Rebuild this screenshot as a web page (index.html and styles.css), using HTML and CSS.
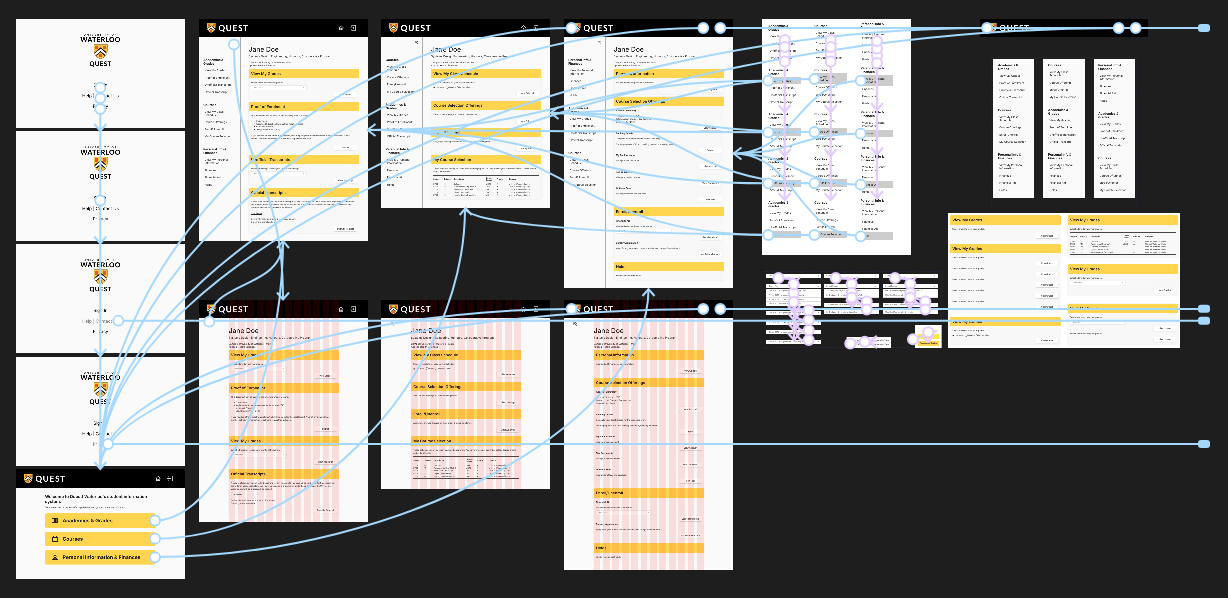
FILE: index.html
```html
<!DOCTYPE html>
<html lang="en">
<head>
<meta charset="utf-8">
<title>Quest prototype canvas</title>
<link rel="stylesheet" href="styles.css">
</head>
<body>
<svg width="0" height="0" class="defs">
  <symbol id="shield" viewBox="0 0 42 46">
    <path d="M1 1H41V20Q40 38 21 45Q2 38 1 20Z" fill="#f4c344" stroke="#8c7a55" stroke-width="1.5"/>
    <path d="M5 5h9v11H5zM28 5h9v11h-9zM16 31h10v9H16z" fill="#e0592f"/>
    <path d="M3 28L21 13L39 28L35 34L21 22L7 34Z" fill="#fff"/>
    <path d="M4 26L21 12L38 26M8 34L21 23L34 34" fill="none" stroke="#222" stroke-width="3"/>
  </symbol>
  <symbol id="home" viewBox="0 0 16 16"><path d="M1.5 8L8 2l6.500 6M3.500 7v7h3.300v-4h2.400v4h3.300V7" fill="none" stroke="#ddd" stroke-width="1.500"/></symbol>
  <symbol id="exit" viewBox="0 0 16 16"><path d="M4 5V1h11v14H4v-4M0 8h10M7 5l3 3-3 3" fill="none" stroke="#ddd" stroke-width="1.500"/></symbol>
  <symbol id="collapse" viewBox="0 0 12 12"><path d="M11 11L3 3M2 8V2h6M7 1l4 4" fill="none" stroke="#555" stroke-width="1.200"/></symbol>
</svg>
<main class="canvas">

<section class="frame splash s1"><small>UNIVERSITY OF</small><b>WATERLOO</b><svg class="crest"><use href="#shield"/></svg><strong>QUEST</strong><a>Sign In</a><a>Help | Contact Us</a><a>Privacy</a></section>
<section class="frame splash s2"><small>UNIVERSITY OF</small><b>WATERLOO</b><svg class="crest"><use href="#shield"/></svg><strong>QUEST</strong><a>Sign In</a><a>Help | Contact Us</a><a>Privacy</a></section>
<section class="frame splash s3"><small>UNIVERSITY OF</small><b>WATERLOO</b><svg class="crest"><use href="#shield"/></svg><strong>QUEST</strong><a>Sign In</a><a class="dim">Help | Contact Us</a><a>Privacy</a></section>
<section class="frame splash s4"><small>UNIVERSITY OF</small><b>WATERLOO</b><svg class="crest"><use href="#shield"/></svg><strong>QUEST</strong><a>Sign In</a><a>Help | Contact Us</a><a class="dim">Privacy</a></section>

<section class="frame home">
  <header class="bar"><svg class="logo"><use href="#shield"/></svg><b>QUEST</b><svg class="ico"><use href="#home"/></svg><svg class="ico"><use href="#exit"/></svg></header>
  <div class="welcome">
    <h2>Welcome to Quest! Waterloo's student information system.</h2>
    <p>To access one of our benefit capabilities and you inclu many skills docs.</p>
    <a class="tile"><svg viewBox="0 0 20 16"><path d="M1 2h8v12H1z" fill="none" stroke="#222" stroke-width="2"/><path d="M10 1h10v14H10z" fill="#222"/><path d="M13 5h4M13 8h4M13 11h4" stroke="#ffd54f"/></svg>Academics &amp; Grades</a>
    <a class="tile"><svg viewBox="0 0 20 16"><path d="M2 2h16v13H2z" fill="none" stroke="#222" stroke-width="2"/><path d="M2 3h16M5 0v3M15 0v3" stroke="#222" stroke-width="3"/></svg>Courses</a>
    <a class="tile"><svg viewBox="0 0 20 16"><circle cx="10" cy="5" r="3.500" fill="none" stroke="#222" stroke-width="2"/><path d="M3 15v-2q7-5 14 0v2z" fill="none" stroke="#222" stroke-width="2"/></svg>Personal Information &amp; Finances</a>
  </div>
</section>

<section class="frame page grades">
  <header class="bar"><svg class="logo"><use href="#shield"/></svg><b>QUEST</b><svg class="ico"><use href="#home"/></svg><svg class="ico"><use href="#exit"/></svg></header>
  <div class="cols">
    <nav class="side">
      <div class="menu"><h4>Academics &amp;<br>Grades</h4><a>View My Grades</a><a>Proof of Enrollment</a><a>Unofficial Transcript</a><a>Official Transcript</a></div>
      <div class="menu"><h4>Courses</h4><a>View My Class<br>Schedule</a><a>Course Offerings</a><a>Enroll/Unenroll</a><a>My Course Selection</a></div>
      <div class="menu"><h4>Personal Info &amp;<br>Finances</h4><a>View My Personal<br>Information</a><a>Finances</a><a>Financial Aid</a><a>Holds</a></div>
    </nav>
    <article class="content">
      <h1>Jane Doe</h1><p class="program">Systems Design Engineering, Honours, Co-operative Program</p><p class="campus">Campus: University of Waterloo - Main<br>Applied Health Sciences</p>
      <div class="card h92"><h3>View My Grades</h3><p>Select a term to view your grades.</p><i class="select"><span>Select Term</span><span>▾</span></i><button>View Grades</button></div>
      <div class="card h152"><h3>Proof of Enrolment</h3><p>This document can be used for the following official reasons:</p><ul><li>Employment</li><li>Registered Education Savings Plan Proof (eg RESP)</li><li>Insurance Providers</li><li>Child/Student Visa (OHIP)</li></ul><p>If you need an official proof of enrollment, click Help page for the most Recent Proof of enrolment. Select another pdf from enrolment, or to submit a request for a student.</p><button>Submit</button></div>
      <div class="card h92"><h3>Unofficial Transcripts</h3><p>Select a transcript to view your unofficial transcript.</p><i class="select"><span>Select Term</span><span>▾</span></i><button>View Transcript</button></div>
      <div class="card h136"><h3>Official Transcripts</h3><p>Notice to students: you can order transcripts for any transcripts you have completed. Important fees required: the order of academic history and your courses and is provided for student applications at the University of Waterloo and will be processed, as needed.</p><p><u>User Terms</u></p><p>Delivery by mail, courier, and local pick up only.<br>Ordering information here.</p><button>Submit a Request</button></div>
    </article>
  </div>
</section>

<section class="frame page courses">
  <header class="bar"><svg class="logo"><use href="#shield"/></svg><b>QUEST</b><svg class="ico"><use href="#home"/></svg><svg class="ico"><use href="#exit"/></svg></header>
  <div class="cols">
    <nav class="side">
      <svg class="fold"><use href="#collapse"/></svg>
      <div class="menu"><h4>Courses</h4><a>View My Class<br>Schedule</a><a>Course Offerings</a><a>Enroll/Unenroll</a><a>My Course Selection</a></div>
      <div class="menu"><h4>Academics &amp;<br>Grades</h4><a>View My Grades</a><a>Proof of Enrollment</a><a>Unofficial Transcript</a><a>Official Transcript</a></div>
      <div class="menu"><h4>Personal Info &amp;<br>Finances</h4><a>View My Personal<br>Information</a><a>Finances</a><a>Financial Aid</a><a>Holds</a></div>
    </nav>
    <article class="content">
      <h1>Jane Doe</h1><p class="program">Systems Design Engineering, Honours, Co-operative Program</p><p class="campus">Campus: University of Waterloo - Main<br>Applied Health Sciences</p>
      <div class="card h88"><h3>View My Class Schedule</h3><p>Select a schedule for your current schedule.</p><p class="tight">◉ List View &nbsp; ◯ Weekly Calendar View</p><button>View Schedule</button></div>
      <div class="card h75"><h3>Course Selection Offerings</h3><p>View course offerings for the upcoming terms.</p><button>View Offerings</button></div>
      <div class="card h74"><h3>Enroll/Unenroll</h3><p>Add, drop, or swap classes for the current or upcoming terms.</p><button>Enroll/Unenroll</button></div>
      <div class="card h133"><h3>My Course Selection</h3><p>These options can only be taken as shared major plan. You can browse your current selected. Course credits and all Enrolments.</p>
        <table><tr><th>Subject</th><th>Catalog</th><th>Description</th><th>Course<br>Career</th><th>Priority</th><th>Campus</th></tr>
        <tr><td>SYDE</td><td>101</td><td>Calculus</td><td>UGRD</td><td>A</td><td>Univ. of Waterloo (Main)</td></tr><tr><td>SYDE</td><td>111</td><td>Fundamental Eng. Math 1</td><td>UGRD</td><td>A</td><td>Univ. of Waterloo (Main)</td></tr><tr><td>SYDE</td><td>113</td><td>Matrices &amp; Linear Sys.</td><td>UG</td><td>A</td><td>Univ. of Waterloo (Main)</td></tr><tr><td>SYDE</td><td>121</td><td>Digital Computation</td><td>UG</td><td>A</td><td>Univ. of Waterloo (Main)</td></tr><tr><td>SYDE</td><td>161</td><td>Intro to Design (Hum Sys)</td><td>UG</td><td>A</td><td>Univ. of Waterloo (Main)</td></tr></table></div>
    </article>
  </div>
</section>

<section class="frame page personal">
  <header class="bar"><svg class="logo"><use href="#shield"/></svg><b>QUEST</b></header>
  <div class="cols">
    <nav class="side">
      <svg class="fold"><use href="#collapse"/></svg>
      <div class="menu"><h4>Personal Info &amp;<br>Finances</h4><a>View My Personal<br>Information</a><a>Finances</a><a>Financial Aid</a><a>Holds</a></div>
      <div class="menu"><h4>Academics &amp;<br>Grades</h4><a>View My Grades</a><a>Proof of Enrollment</a><a>Unofficial Transcript</a><a>Official Transcript</a></div>
      <div class="menu"><h4>Courses</h4><a>View My Class<br>Schedule</a><a>Course Offerings</a><a>Enroll/Unenroll</a><a>My Course Selection</a></div>
    </nav>
    <article class="content">
      <h1>Jane Doe</h1><p class="program">Systems Design Engineering, Honours, Co-operative Program</p><p class="campus">Campus: University of Waterloo - Main<br>Applied Health Sciences</p>
      <div class="card h76"><h3>Personal Information</h3><p>View and edit your personal information.</p><button>View/Update</button></div>
      <div class="card h324"><h3>Course Selection Offerings</h3>
        <div class="part"><h5>Account Summary</h5><p>Account Term: FALL 2018<br>Total Account Charges: See itemized<br>Due date: July 2018</p><button>View Account</button></div>
        <div class="part"><h5>Banking Details</h5><p>Complete your direct deposit for the upcoming term.</p><p>For the purposes of ID and banking banned in, marking paid fees.</p><button>Deposit</button></div>
        <div class="part"><h5>My Bank Account</h5><p>View your bank account.</p><button>View Account</button></div>
        <div class="part"><h5>Tax Documents</h5><p>View your tax documents.</p><button>View Documents</button></div>
        <div class="part"><h5>Optional Fees</h5><p>View optional fees and services.</p><button>View Fees</button></div>
      </div>
      <div class="card h158"><h3>Enroll/Unenroll</h3>
        <div class="part"><h5>Financial Aid</h5><p>View and edit your financial aid status.</p><i class="select"><span>Select Term</span><span>▾</span></i><button>View Financial Aid</button></div>
        <div class="part"><h5>Bursary Application</h5><p>Apply for a government or need-based award using a Submit button.</p><button>Apply for a Bursary</button></div></div>
      <div class="card h55"><h3>Holds</h3><p>You have no current holds.</p></div>
    </article>
  </div>
</section>

<section class="frame page grades-grid">
  <header class="bar"><svg class="logo"><use href="#shield"/></svg><b>QUEST</b><svg class="ico"><use href="#home"/></svg><svg class="ico"><use href="#exit"/></svg></header>
  <article class="content wide">
    <h1>Jane Doe</h1><p class="program">Systems Design Engineering, Honours, Co-operative Program</p><p class="campus">Campus: University of Waterloo - Main<br>Applied Health Sciences</p>
    <div class="card h92"><h3>View My Grades</h3><p>Select a term to view your grades.</p><i class="select"><span>Select Term</span><span>▾</span></i><button>View Grades</button></div>
    <div class="card h152"><h3>Proof of Enrolment</h3><p>This document can be used for the following official reasons:</p><ul><li>Employment</li><li>Registered Education Savings Plan Proof (eg RESP)</li><li>Insurance Providers</li><li>Child/Student Visa (OHIP)</li></ul><p>If you need an official proof of enrollment, click Help page for the most Recent Proof of enrolment. Select another pdf from enrolment, or to submit a request for a student.</p><button>Submit</button></div>
    <div class="card h92"><h3>View My Grades</h3><p>Select a transcript to view your unofficial transcript.</p><i class="select"><span>Select Term</span><span>▾</span></i><button>View Transcript</button></div>
    <div class="card h136"><h3>Official Transcripts</h3><p>Notice to students: you can order transcripts for any transcripts you have completed. Important fees required: the order of academic history and your courses and is provided for student applications at the University of Waterloo and will be processed, as needed.</p><p><u>User Terms</u></p><p>Delivery by mail, courier, and local pick up only.<br>Ordering information here.</p><button>Submit a Request</button></div>
  </article>
  <div class="stripes"></div>
</section>

<section class="frame page courses-grid">
  <header class="bar"><svg class="logo"><use href="#shield"/></svg><b>QUEST</b><svg class="ico"><use href="#home"/></svg><svg class="ico"><use href="#exit"/></svg></header>
  <svg class="fold start"><use href="#collapse"/></svg>
  <article class="content wide">
    <h1>Jane Doe</h1><p class="program">Systems Design Engineering, Honours, Co-operative Program</p><p class="campus">Campus: University of Waterloo - Main<br>Applied Health Sciences</p>
    <div class="card h88"><h3>View My Class Schedule</h3><p>Select a schedule for your current schedule.</p><p class="tight">◉ List View &nbsp; ◯ Weekly Calendar View</p><button>View Schedule</button></div>
    <div class="card h75"><h3>Course Selection Offerings</h3><p>View course offerings for the upcoming terms.</p><button>View Offerings</button></div>
    <div class="card h74"><h3>Enroll/Unenroll</h3><p>Add, drop, or swap classes for the current or upcoming terms.</p><button>Enroll/Unenroll</button></div>
    <div class="card h133"><h3>My Course Selection</h3><p>These options can only be taken as shared major plan. You can browse your current selected. Course credits and all Enrolments.</p>
      <table><tr><th>Subject</th><th>Catalog</th><th>Description</th><th>Course<br>Career</th><th>Priority</th><th>Campus</th></tr>
      <tr><td>SYDE</td><td>101</td><td>Calculus</td><td>UGRD</td><td>A</td><td>Univ. of Waterloo (Main)</td></tr><tr><td>SYDE</td><td>111</td><td>Fundamental Eng. Math 1</td><td>UGRD</td><td>A</td><td>Univ. of Waterloo (Main)</td></tr><tr><td>SYDE</td><td>113</td><td>Matrices &amp; Linear Sys.</td><td>UG</td><td>A</td><td>Univ. of Waterloo (Main)</td></tr><tr><td>SYDE</td><td>121</td><td>Digital Computation</td><td>UG</td><td>A</td><td>Univ. of Waterloo (Main)</td></tr><tr><td>SYDE</td><td>161</td><td>Intro to Design (Hum Sys)</td><td>UG</td><td>A</td><td>Univ. of Waterloo (Main)</td></tr></table></div>
  </article>
  <div class="stripes"></div>
</section>

<section class="frame page personal-grid">
  <header class="bar"><svg class="logo"><use href="#shield"/></svg><b>QUEST</b></header>
  <svg class="fold start"><use href="#collapse"/></svg>
  <article class="content wide">
    <h1>Jane Doe</h1><p class="program">Systems Design Engineering, Honours, Co-operative Program</p><p class="campus">Campus: University of Waterloo - Main<br>Applied Health Sciences</p>
    <div class="card h76"><h3>Personal Information</h3><p>View and edit your personal information.</p><button>View/Update</button></div>
    <div class="card h324"><h3>Course Selection Offerings</h3>
      <div class="part"><h5>Account Summary</h5><p>Account Term: FALL 2018<br>Total Account Charges: See itemized<br>Due date: July 2018</p><button>View Account</button></div>
      <div class="part"><h5>Banking Details</h5><p>Complete your direct deposit for the upcoming term.</p><p>For the purposes of ID and banking banned in, marking paid fees.</p><button>Deposit</button></div>
      <div class="part"><h5>My Bank Account</h5><p>View your bank account.</p><button>View Account</button></div>
      <div class="part"><h5>Tax Documents</h5><p>View your tax documents.</p><button>View Documents</button></div>
      <div class="part"><h5>Optional Fees</h5><p>View optional fees and services.</p><button>View Fees</button></div>
    </div>
    <div class="card h158"><h3>Enroll/Unenroll</h3>
      <div class="part"><h5>Financial Aid</h5><p>View and edit your financial aid status.</p><i class="select"><span>Select Term</span><span>▾</span></i><button>View Financial Aid</button></div>
      <div class="part"><h5>Bursary Application</h5><p>Apply for a government or need-based award using a Submit button.</p><button>Apply for a Bursary</button></div></div>
    <div class="card h55"><h3>Holds</h3><p>You have no current holds.</p></div>
  </article>
  <div class="stripes"></div>
</section>

<section class="states">
  <div class="state-col">
    <div class="menu"><h4>Academics &amp;<br>Grades</h4><a>View My Grades</a><a>Proof of Enrollment</a><a>Unofficial Transcript</a><a>Official Transcript</a></div>
    <div class="menu"><h4>Academics &amp;<br>Grades</h4><a class="on">View My Grades</a><a>Proof of Enrollment</a><a>Unofficial Transcript</a><a>Official Transcript</a></div>
    <div class="menu"><h4>Academics &amp;<br>Grades</h4><a>View My Grades</a><a class="on">Proof of Enrollment</a><a>Unofficial Transcript</a><a>Official Transcript</a></div>
    <div class="menu"><h4>Academics &amp;<br>Grades</h4><a>View My Grades</a><a>Proof of Enrollment</a><a class="on">Unofficial Transcript</a><a>Official Transcript</a></div>
    <div class="menu"><h4>Academics &amp;<br>Grades</h4><a>View My Grades</a><a>Proof of Enrollment</a><a>Unofficial Transcript</a><a class="on">Official Transcript</a></div>
  </div>
  <div class="state-col">
    <div class="menu"><h4>Courses</h4><a>View My Class<br>Schedule</a><a>Course Offerings</a><a>Enroll/Unenroll</a><a>My Course Selection</a></div>
    <div class="menu"><h4>Courses</h4><a class="on">View My Class<br>Schedule</a><a>Course Offerings</a><a>Enroll/Unenroll</a><a>My Course Selection</a></div>
    <div class="menu"><h4>Courses</h4><a>View My Class<br>Schedule</a><a class="on">Course Offerings</a><a>Enroll/Unenroll</a><a>My Course Selection</a></div>
    <div class="menu"><h4>Courses</h4><a>View My Class<br>Schedule</a><a>Course Offerings</a><a class="on">Enroll/Unenroll</a><a>My Course Selection</a></div>
    <div class="menu"><h4>Courses</h4><a>View My Class<br>Schedule</a><a>Course Offerings</a><a>Enroll/Unenroll</a><a class="on">My Course Selection</a></div>
  </div>
  <div class="state-col raised">
    <div class="menu"><h4>Personal Info &amp;<br>Finances</h4><a>View My Personal<br>Information</a><a>Finances</a><a>Financial Aid</a><a>Holds</a></div>
    <div class="menu"><h4>Personal Info &amp;<br>Finances</h4><a class="on">View My Personal<br>Information</a><a>Finances</a><a>Financial Aid</a><a>Holds</a></div>
    <div class="menu"><h4>Personal Info &amp;<br>Finances</h4><a>View My Personal<br>Information</a><a class="on">Finances</a><a>Financial Aid</a><a>Holds</a></div>
    <div class="menu"><h4>Personal Info &amp;<br>Finances</h4><a>View My Personal<br>Information</a><a>Finances</a><a class="on">Financial Aid</a><a>Holds</a></div>
    <div class="menu"><h4>Personal Info &amp;<br>Finances</h4><a>View My Personal<br>Information</a><a>Finances</a><a>Financial Aid</a><a class="on">Holds</a></div>
  </div>
</section>

<header class="bar loose-bar"><svg class="logo"><use href="#shield"/></svg><b>QUEST</b></header>

<section class="menus">
  <nav>
    <div class="menu"><h4>Academics &amp;<br>Grades</h4><a>View My Grades</a><a>Proof of Enrollment</a><a>Unofficial Transcript</a><a>Official Transcript</a></div>
    <div class="menu"><h4>Courses</h4><a>View My Class<br>Schedule</a><a>Course Offerings</a><a>Enroll/Unenroll</a><a>My Course Selection</a></div>
    <div class="menu"><h4>Personal Info &amp;<br>Finances</h4><a>View My Personal<br>Information</a><a>Finances</a><a>Financial Aid</a><a>Holds</a></div>
  </nav>
  <nav>
    <div class="menu"><h4>Courses</h4><a>View My Class<br>Schedule</a><a>Course Offerings</a><a>Enroll/Unenroll</a><a>My Course Selection</a></div>
    <div class="menu"><h4>Academics &amp;<br>Grades</h4><a>View My Grades</a><a>Proof of Enrollment</a><a>Unofficial Transcript</a><a>Official Transcript</a></div>
    <div class="menu"><h4>Personal Info &amp;<br>Finances</h4><a>View My Personal<br>Information</a><a>Finances</a><a>Financial Aid</a><a>Holds</a></div>
  </nav>
  <nav>
    <div class="menu"><h4>Personal Info &amp;<br>Finances</h4><a>View My Personal<br>Information</a><a>Finances</a><a>Financial Aid</a><a>Holds</a></div>
    <div class="menu"><h4>Academics &amp;<br>Grades</h4><a>View My Grades</a><a>Proof of Enrollment</a><a>Unofficial Transcript</a><a>Official Transcript</a></div>
    <div class="menu"><h4>Courses</h4><a>View My Class<br>Schedule</a><a>Course Offerings</a><a>Enroll/Unenroll</a><a>My Course Selection</a></div>
  </nav>
</section>

<section class="kit">
  <div class="kit-col">
    <div class="card k77"><h3>View My Grades</h3><p>Select a term to view your grades.</p><button>View Grades</button></div>
    <div class="card k207"><h3>View My Grades</h3>
      <div class="part"><p>Select a term to view your grades.</p><button>View Grades</button></div>
      <div class="part"><p>Select a term to view your grades.</p><button>View Grades</button></div>
      <div class="part"><p>Select a term to view your grades.</p><button>View Grades</button></div>
      <div class="part"><p>Select a term to view your grades.</p><button>View Grades</button></div>
      <div class="part"><p>Select a term to view your grades.</p><button>View Grades</button></div></div>
    <div class="card k87"><h3>View My Grades</h3><p>Select a term to view your grades.</p><p class="tight">◉ List View &nbsp; ◯ Weekly Calendar View</p><button>View Grades</button></div>
  </div>
  <div class="kit-col">
    <div class="card k127"><h3>View My Grades</h3><p>Select a term to view your grades.</p>
      <table><tr><th>Subject</th><th>Catalog</th><th>Description</th><th>Course<br>Career</th><th>Priority</th><th>Campus</th></tr>
      <tr><td>SYDE</td><td>101</td><td>Calculus</td><td>UGRD</td><td>A</td><td>Univ. of Waterloo (Main)</td></tr><tr><td>SYDE</td><td>111</td><td>Fundamental Eng. Math 1</td><td>UGRD</td><td>A</td><td>Univ. of Waterloo (Main)</td></tr><tr><td>SYDE</td><td>113</td><td>Matrices &amp; Linear Sys.</td><td>UG</td><td>A</td><td>Univ. of Waterloo (Main)</td></tr><tr><td>SYDE</td><td>121</td><td>Digital Computation</td><td>UG</td><td>A</td><td>Univ. of Waterloo (Main)</td></tr><tr><td>SYDE</td><td>161</td><td>Intro to Design (Hum Sys)</td><td>UG</td><td>A</td><td>Univ. of Waterloo (Main)</td></tr></table></div>
    <div class="card k93"><h3>View My Grades</h3><p>Select a term to view your grades.</p><i class="select"><span>Select Term</span><span>▾</span></i><button>View Grades</button></div>
    <div class="card k126"><h3>View My Grades</h3><div class="part"><p>Select a term to view your grades.</p><i class="select"><span>Select Term</span><span>▾</span></i><button>View Grades</button></div><div class="part"><p>Select a term to view your grades.</p><button>View Grades</button></div></div>
  </div>
</section>

<section class="drops">
  <div class="drop-col">
    <div class="row">Select Term<span>▾</span></div>
    <div class="row open">Select Term<span>▴</span></div>
    <div class="list"><p>Fall 2018 | Undergraduate | University (UW)</p><p>Winter 2019 | Undergraduate | University</p><p>Spring 2019 | Undergraduate | University</p><p>Fall 2019 | Undergraduate | University</p></div>
    <div class="row pick">Fall 2018 | Undergraduate | University of W<span>▾</span></div>
    <div class="row next">Winter 2019 | Undergraduate | University<span>▾</span></div>
    <div class="row next">Spring 2019 | Undergraduate | University<span>▾</span></div>
    <div class="row next">Fall 2019 | Undergraduate | University of W<span>▾</span></div>
  </div>
  <div class="drop-col">
    <div class="row">Select Career<span>▾</span></div>
    <div class="row open">Select Career<span>▴</span></div>
    <div class="list"><p>1. Undergraduate, University of Waterloo</p><p>2. Graduate, University of Waterloo (UW)</p></div>
    <div class="row pick">1. Undergraduate, University of Waterloo<span>▾</span></div>
    <div class="row last">2. Graduate, University of Waterloo<span>▾</span></div>
  </div>
  <div class="drop-col third">
    <div class="row">Select Format<span>▾</span></div>
    <div class="row open">Select Format<span>▴</span></div>
    <div class="list"><p>Official Transcript | University of Waterloo</p><p>Unofficial Transcript | University</p></div>
    <div class="row pick">Official Transcript | University of Waterloo<span>▾</span></div>
    <div class="row last">Unofficial Transcript | University<span>▾</span></div>
  </div>
</section>
<div class="radios"><p>◉ List View ◯ Weekly Calendar View</p><p>◯ List View ◉ Weekly Calendar View</p></div>
<div class="buttons"><i></i><i class="lit"></i><i class="full">Academics &amp; Grades</i></div>
</main>

<svg class="wires" viewBox="0 0 1228 598">
  <defs>
    <path id="down" d="M-6-7L0 0L6-7" />
    <path id="up" d="M-6 7L0 0L6 7" />
    <path id="left" d="M8-6L0 0L8 6" />
  </defs>
  <g class="blue">
    <path d="M100.300 109V468M118 320.700H1200M108 444H1200M720 28H1200M720 309H1200"/>
    <path d="M571 28C335 28 100 248 100 469M703 28C401 28 100 248 100 469M987 28C543 28 100 248 100 469M1119 28C609 28 100 248 100 469"/>
    <path d="M571 309C335 309 100 389 100 469M703 309C401 309 100 389 100 469" />
    <path d="M234 45C234 170 283 170 283 299M209 321.500C209 280 283 290 283 241M155 520.500C219 520.500 283 381 283 241M155 538.700C310 538.700 465 373 465 208M155 557C402 557 648.500 423 648.500 289"/>
    <path d="M367 130C568 130 568 80.700 768 80.700M367 130C568 130 568 132.300 768 132.300M367 130C568 130 568 183.300 768 183.300M367 130C568 130 568 235 768 235"/>
    <path d="M550 113C682 113 682 79 814 79M550 113C682 113 682 132 814 132M550 113C682 113 682 183.300 814 183.300M465 208C465 225 620 235 814 235"/>
    <path d="M733 153.500C797 153.500 797 80.700 861 80.700M733 153.500C797 153.500 797 133.700 861 133.700M733 153.500C797 153.500 797 184.700 861 184.700M733 153.500C797 153.500 797 236 861 236"/>
    <use href="#down" x="100.300" y="131"/><use href="#down" x="100.300" y="243.500"/><use href="#down" x="100.300" y="356"/><use href="#down" x="100.300" y="469"/><use href="#down" x="283" y="299.500"/>
    <use href="#up" x="283" y="241"/><use href="#up" x="465.700" y="208"/><use href="#up" x="648.500" y="289"/>
    <use href="#left" x="367.500" y="130"/><use href="#left" x="550.500" y="113"/><use href="#left" x="733.500" y="153.500"/>
    <g class="dots">
      <circle cx="100.300" cy="87.700" r="5"/><circle cx="100.300" cy="98.300" r="5"/><circle cx="100.300" cy="109" r="5"/><circle cx="100.300" cy="200.500" r="5"/><circle cx="118.300" cy="320.700" r="5"/><circle cx="108" cy="444" r="5"/>
      <circle cx="155" cy="520.500" r="5"/><circle cx="155" cy="538.700" r="5"/><circle cx="155" cy="557.300" r="5"/><circle cx="234" cy="44.500" r="5"/><circle cx="209.300" cy="321.700" r="5"/>
      <circle cx="571.500" cy="28" r="5"/><circle cx="703.300" cy="28" r="5"/><circle cx="720.300" cy="28" r="5"/><circle cx="987" cy="28" r="5"/><circle cx="1118.700" cy="28" r="5"/><circle cx="1135.700" cy="28" r="5"/>
      <circle cx="571.500" cy="309" r="5"/><circle cx="703.300" cy="309" r="5"/><circle cx="720.300" cy="309" r="5"/>
    </g>
    <g class="ends"><rect x="1198" y="24" width="12" height="8" rx="3"/><rect x="1198" y="304.700" width="12" height="8" rx="3"/><rect x="1198" y="316.700" width="12" height="8" rx="3"/><rect x="1198" y="440" width="12" height="8" rx="3"/></g>
  </g>
  <g class="violet">
    <path d="M784.700 41V200M830.700 41V200M877 41V198"/>
    <use href="#down" x="784.700" y="112"/><use href="#down" x="784.700" y="156"/><use href="#down" x="784.700" y="200"/>
    <use href="#down" x="830.700" y="112"/><use href="#down" x="830.700" y="156"/><use href="#down" x="830.700" y="200"/>
    <use href="#down" x="877" y="110"/><use href="#down" x="877" y="154.500"/><use href="#down" x="877" y="198"/>
    <path d="M778 278L794 279V340M836 278L852 279V305M895 278L910 279V305M794 302C794 314 800 310 809 310M794 302C794 322 800 320 809 320M794 302C794 334 800 330 809 330M794 302C794 345 800 340 809 340M852 297L867 301M852 297L867 309M910 297L925 301M910 297L925 309M850 343L877 341M913 339L937 331"/>
    <use href="#down" x="794" y="284"/><use href="#down" x="852" y="284"/><use href="#down" x="910" y="284"/><use href="#down" x="794" y="340"/><use href="#down" x="794" y="330"/><use href="#down" x="794" y="320"/><use href="#down" x="794" y="313"/><use href="#down" x="852" y="307"/><use href="#down" x="910" y="308"/><use href="#left" x="869" y="342"/><use href="#down" x="928" y="342"/>
    <g class="dots">
      <circle cx="784.700" cy="40" r="5"/><circle cx="784.700" cy="54.300" r="5"/><circle cx="784.700" cy="47" r="5"/><circle cx="784.700" cy="61.500" r="5"/>
      <circle cx="830.700" cy="40" r="5"/><circle cx="830.700" cy="54.300" r="5"/><circle cx="830.700" cy="47" r="5"/><circle cx="830.700" cy="61.500" r="5"/>
      <circle cx="877" cy="55.500" r="5"/><circle cx="877" cy="48.500" r="5"/><circle cx="877" cy="41" r="5"/><circle cx="877" cy="63" r="5"/>
      <circle cx="778.500" cy="278" r="5"/><circle cx="793.700" cy="293" r="5"/><circle cx="793.700" cy="284" r="5"/><circle cx="793.700" cy="302" r="5"/><circle cx="808.700" cy="310.300" r="5"/><circle cx="808.700" cy="320" r="5"/><circle cx="808.700" cy="330.300" r="5"/><circle cx="808.700" cy="340" r="5"/>
      <circle cx="835.700" cy="278" r="5"/><circle cx="851.700" cy="284" r="5"/><circle cx="851.700" cy="293" r="5"/><circle cx="851.700" cy="297.500" r="5"/><circle cx="866.700" cy="301.500" r="5"/><circle cx="866.700" cy="309.500" r="5"/>
      <circle cx="895" cy="278" r="5"/><circle cx="910.300" cy="284" r="5"/><circle cx="910.300" cy="293" r="5"/><circle cx="910.300" cy="297.500" r="5"/><circle cx="925.300" cy="301.500" r="5"/><circle cx="925.300" cy="309.500" r="5"/>
      <circle cx="850.300" cy="343.500" r="5"/><circle cx="864.700" cy="341.700" r="5"/><circle cx="913" cy="339.300" r="5"/><circle cx="928.300" cy="332.300" r="5"/>
    </g>
  </g>
  <g class="blue dots">
    <circle cx="768.300" cy="80.700" r="5"/><circle cx="768.300" cy="132.300" r="5"/><circle cx="768.300" cy="183.300" r="5"/><circle cx="768.300" cy="235" r="5"/>
    <circle cx="814.500" cy="79" r="5"/><circle cx="814.500" cy="132" r="5"/><circle cx="814.500" cy="183.300" r="5"/><circle cx="814.500" cy="235" r="5"/>
    <circle cx="860.700" cy="80.700" r="5"/><circle cx="860.700" cy="133.700" r="5"/><circle cx="860.700" cy="184.700" r="5"/><circle cx="860.700" cy="236.300" r="5"/>
  </g>
</svg>
</body>
</html>
```

FILE: styles.css
```css
* { box-sizing: border-box; margin: 0; padding: 0; }
body { width: 1228px; height: 598px; overflow: hidden; position: relative; background: #1e1e1e; font-family: Inter, "Open Sans", sans-serif; color: #222; text-rendering: geometricPrecision; }
.defs { position: absolute; }

/* The board is drawn at full size and zoomed out to a third. */
.canvas { position: absolute; left: 0; top: 0; width: 3684px; height: 1794px; transform: scale(.33333); transform-origin: 0 0; will-change: transform; }
.frame { position: absolute; width: 507px; background: #fafafa; overflow: hidden; }

.splash { left: 48px; height: 328px; display: flex; flex-direction: column; align-items: center; padding-top: 43px; color: #000; }
.s1 { top: 56px; }
.s2 { top: 394px; }
.s3 { top: 732px; }
.s4 { top: 1070px; }
.splash small { font: 700 8px/10px Lato, sans-serif; letter-spacing: 3.2px; }
.splash b { font: 900 20.500px/20px Lato, sans-serif; letter-spacing: .8px; }
.crest { width: 42px; height: 46px; margin: 3px 0 4px; }
.splash strong { font: 900 19px/20px Lato, sans-serif; letter-spacing: .8px; margin-bottom: 46px; }
.splash a { font-size: 13.200px; line-height: 16px; margin-bottom: 15.500px; }
.splash .dim { color: #888; }

.bar { height: 55px; background: #000; color: #fff; display: flex; align-items: center; padding: 0 36px 0 23px; }
.bar b { flex: 1; font: 700 25px/30px Lato, sans-serif; letter-spacing: 2px; margin-left: 8px; }
.logo { width: 27px; height: 30px; }
.ico { width: 17px; height: 17px; margin-left: 19px; }

.home { left: 48px; top: 1408px; height: 328px; }
.welcome { display: flex; flex-direction: column; padding: 19px 87px; }
.welcome h2 { font-size: 12.400px; line-height: 15px; margin-right: -8px; }
.welcome p { font-size: 7.100px; line-height: 12px; margin: 5px 0 11px; white-space: nowrap; }
.tile { height: 44px; width: 332px; margin-bottom: 11px; border-radius: 6px; background: #ffd54f; display: flex; align-items: center; padding-left: 20px; gap: 13px; font-size: 14.800px; font-weight: 700; }
.tile svg { width: 20px; height: 16px; }

.page { display: flex; flex-direction: column; }
.grades { left: 597px; top: 56px; height: 667px; }
.courses { left: 1144px; top: 56px; height: 567px; }
.personal { left: 1692px; top: 56px; height: 809px; }
.grades-grid { left: 597px; top: 900px; height: 665px; }
.courses-grid { left: 1144px; top: 900px; height: 567px; }
.personal-grid { left: 1692px; top: 900px; height: 809px; }
.cols { display: flex; flex: 1; }
.side { width: 125px; border-right: 3px solid #aaa; padding: 64px 0 0 13px; position: relative; }
.fold { position: absolute; right: 10px; top: 11px; width: 12px; height: 12px; }
.fold.start { left: 27px; top: 66px; }
.content { width: 355px; padding: 22px 0 0 24px; }
.content.wide { width: 420px; padding-left: 89px; }
.content h1 { font-size: 20px; line-height: 30px; font-weight: 500; color: #222; }
.program { font-size: 8.500px; line-height: 10px; margin-top: 2px; white-space: nowrap; }
.campus { font-size: 7px; line-height: 9px; margin: 8px 0 6px; }
.content .card { margin-bottom: 7px; }

.menu { display: flex; flex-direction: column; gap: 11.500px; margin-bottom: 29px; }
.menu h4 { font-size: 9.500px; line-height: 11px; margin-bottom: -2.500px; }
.menu a { font-size: 8.200px; line-height: 10px; padding-left: 4px; white-space: nowrap; color: #111; }

.card { display: flex; flex-direction: column; background: #f8f8f8; border-radius: 4px; box-shadow: 0 0 2px #ddd; padding: 0 7px 8px; }
.card h3 { height: 28px; flex: none; margin: 0 -7px 9px; padding-left: 7px; border-radius: 3px 3px 0 0; background: #ffd54f; font-size: 11.300px; line-height: 28px; font-weight: 600; }
.card p, .card li, .card h5 { font-size: 6px; line-height: 9px; }
.card p { margin-bottom: 8px; }
.card .tight { margin-top: -3px; margin-bottom: 0; }
.card h5 { font-size: 6.800px; margin-bottom: 8px; }
.card ul { list-style: none; margin-bottom: 8px; }
.card li { line-height: 8.700px; padding-left: 9px; }
.card li::before { content: "• "; }
.card button { width: 67px; height: 15px; flex: none; margin-top: auto; align-self: flex-end; border: 0; background: #fff; box-shadow: 0 1px 2px #ccc; border-radius: 2px; font: 500 6px/15px Inter, sans-serif; color: #222; white-space: nowrap; }
.select { display: flex; justify-content: space-between; flex: none; width: 166px; height: 12px; margin-top: -4px; padding: 0 8px; background: #fff; box-shadow: 0 0 2px #ccc; font: 5px/12px Inter, sans-serif; color: #777; }
.part { display: flex; flex-direction: column; margin-bottom: 3.600px; }
.part button { margin-top: -3px; }
.part .select { margin-bottom: 8px; }
.h55 { height: 55px; }
.h74 { height: 74px; }
.h75 { height: 75px; }
.h76 { height: 76px; }
.h88 { height: 88px; }
.h92 { height: 92px; }
.h133 { height: 133px; }
.h136 { height: 136px; }
.h152 { height: 152px; }
.h158 { height: 158px; }
.h324 { height: 324px; }

table { width: 317px; table-layout: fixed; border-collapse: collapse; border-top: 2px solid #444; border-bottom: 2px solid #444; margin-top: -3px; font-size: 5.500px; line-height: 8.200px; }
th { text-align: left; font-size: 5.500px; line-height: 6px; padding: 5px 0; height: 21px; }
td { white-space: nowrap; }
th:nth-child(1), th:nth-child(2) { width: 31px; }
th:nth-child(3) { width: 96px; }
th:nth-child(4) { width: 32px; }
th:nth-child(5) { width: 36px; }

/* Twelve-column layout guide over a frame. */
.stripes { position: absolute; left: 89px; top: 0; bottom: 0; width: 331px; background: repeating-linear-gradient(90deg, rgba(255, 0, 0, .11) 0 20.400px, transparent 20.400px 28.200px); }

.states { position: absolute; left: 2287px; top: 56px; width: 446px; height: 708px; padding: 17px 0 0 18px; display: grid; grid-template-columns: 138px 139px 139px; background: #fff; }
.state-col { display: grid; grid-auto-rows: 132.500px; width: 102px; align-content: start; }
.state-col .menu { margin: 0; }
.state-col.raised { margin-top: -6px; }
.menu .on { background: #ccc; padding-top: 6px; padding-bottom: 6px; margin: -6px 4px -6px 0; }

.loose-bar { position: absolute; left: 2940px; top: 56px; width: 505px; }
.menus { position: absolute; left: 2974px; top: 172px; width: 436px; height: 450px; border: 2px dashed #2b2438; padding: 4px; display: flex; gap: 27px; }
.menus nav { width: 124px; height: 416px; background: #fafafa; padding: 13px 0 0 14px; }

.kit { position: absolute; left: 2845px; top: 640px; width: 695px; height: 403px; background: #fff; padding: 6px 5px; display: flex; gap: 21px; }
.kit-col { width: 332px; display: flex; flex-direction: column; }
.k77 { height: 77px; margin-bottom: 9px; }
.k207 { height: 207px; margin-bottom: 12px; }
.k87 { height: 87px; }
.k127 { height: 127px; margin-bottom: 21px; }
.k93 { height: 93px; margin-bottom: 25px; }
.k126 { height: 126px; }
.k207 .part { margin-bottom: 4.700px; }
.k207 .part button { margin-top: -4px; }

.drops { position: absolute; left: 2288px; top: 813px; width: 538px; height: 230px; border: 2px dashed #2b2438; padding: 7px 8px; display: flex; gap: 7px; }
.drop-col { width: 166px; flex: none; font-size: 5.500px; line-height: 12px; color: #555; }
.drop-col.third { margin-left: 4px; }
.row { height: 12px; padding: 0 8px; background: #fff; display: flex; justify-content: space-between; white-space: nowrap; }
.row.open { margin-top: 19px; margin-bottom: 2px; }
.row.pick { margin-top: 15px; }
.row.next { margin-top: 17px; }
.row.last { margin-top: 11px; }
.list { background: #fff; }
.list p { height: 12.750px; padding-left: 8px; border-bottom: 1px solid #ddd; white-space: nowrap; overflow: hidden; }
.radios { position: absolute; left: 2540px; top: 1011px; width: 133px; height: 33px; background: #fff; padding: 5px 6px; font-size: 6px; line-height: 12px; text-align: right; white-space: nowrap; }
.buttons { position: absolute; left: 2745px; top: 975px; width: 80px; height: 69px; background: #fff; padding: 6px 8px; display: flex; flex-direction: column; gap: 6px; }
.buttons i { height: 15px; background: #fafafa; border-radius: 2px; font: 600 5px/15px Inter, sans-serif; text-align: center; white-space: nowrap; }
.buttons .lit { background: #ffe93b; }
.buttons .full { background: #ffd54f; }

.wires { position: absolute; left: 0; top: 0; width: 1228px; height: 598px; fill: none; }
.blue { stroke: #a6d8fd; stroke-width: 2; }
.violet { stroke: #e4ccff; stroke-width: 2.300; }
.dots circle { fill: #fff; }
.blue.dots circle, .blue .dots circle { stroke-width: 1.800; }
.violet .dots circle { stroke-width: 2.100; }
.ends rect { fill: #a6d8fd; stroke: none; }
```
